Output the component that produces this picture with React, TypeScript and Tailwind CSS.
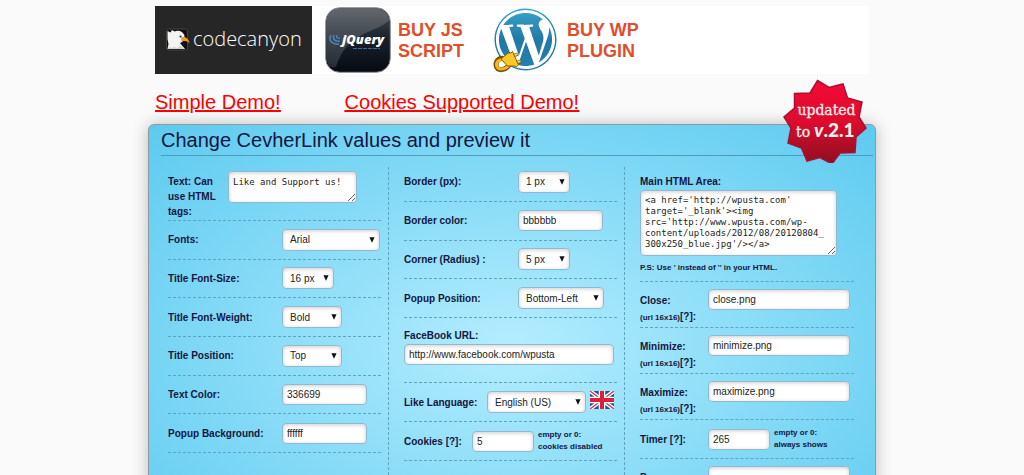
import type { ReactNode } from "react";
import { FaWordpress } from "react-icons/fa";

const box =
  "rounded border border-[#8fb9cf] bg-white font-normal text-[#222] shadow-[inset_0_1px_4px_rgba(0,0,0,0.2)] outline-none";
const field = `${box} text-[10px]`;
const area = `${box} block overflow-hidden p-1 font-['DejaVu_Sans_Mono',monospace] text-[9px]`;
const line = "border-b border-dashed border-[#5fa3be]";
const column = "pl-[15px] pr-[7px]";
const divider = "border-r border-dashed border-[#5fa3be]";

function Input({ id, value, className }: { id: string; value: string; className: string }) {
  return <input id={id} defaultValue={value} className={`${field} h-[21px] px-1 ${className}`} />;
}

function Select({ id, value, className }: { id: string; value: string; className: string }) {
  return (
    <span className={`relative inline-flex ${className}`}>
      <select id={id} className={`${field} h-[22px] w-full appearance-none pr-4 pl-[7px]`}>
        <option>{value}</option>
      </select>
      <svg viewBox="0 0 6 6" className="pointer-events-none absolute top-2 right-[5px] size-[6px]">
        <path d="M.4.3h5.2L3 5.7z" fill="#111" />
      </svg>
    </span>
  );
}

function Row({ id, label, offset, children }: { id: string; label: string; offset: string; children: ReactNode }) {
  return (
    <div className={`flex items-center ${line}`}>
      <label htmlFor={id} className={`shrink-0 ${offset}`}>
        {label}
      </label>
      {children}
    </div>
  );
}

function Note({ children }: { children: ReactNode }) {
  return <span className="ml-1 text-[8px] leading-3">{children}</span>;
}

function UrlRow({ id, label, value }: { id: string; label: string; value: string }) {
  return (
    <div className={`flex h-[46px] items-start pt-[7px] ${line}`}>
      <label htmlFor={id} className="w-[68px] shrink-0 pt-1 leading-4">
        {label}
        <br />
        <span className="text-[8px]">(url 16x16)</span>[?]:
      </label>
      <Input id={id} value={value} className="w-[142px]" />
    </div>
  );
}

function CodeCanyon() {
  return (
    <a href="#codecanyon" className="flex h-[68px] w-[157px] items-center bg-[#262626] pl-[11px]">
      <svg viewBox="0 0 24 24" className="size-6">
        <rect x=".5" y="1" width="21" height="21" rx="2" fill="#111" stroke="#444" />
        <path d="M1.500 21l1-5-1-5L1.500 3l3 1.500L6 2l2.500 1.500c4-2 8.500 0 10 4L18 12l-2 2-2 1 5 6z" fill="#f4f4f2" />
        <path d="M2 21l1-2 3 1 2-1 3 1 2-1 2-1 3 3z" fill="#cfd0cc" />
        <path d="M15 9.500c4-1.500 8 1 8.500 6-2-2.500-4-3-8-2z" fill="#f39b1d" />
        <circle cx="14.500" cy="8.500" r="1" fill="#222" />
      </svg>
      <span className="pb-[3px] pl-[3px] font-['Open_Sans',sans-serif] text-[20px] leading-6 font-light text-white">codecanyon</span>
    </a>
  );
}

function JQueryIcon() {
  return (
    <svg viewBox="0 0 66 66" className="size-[66px]" role="img" aria-label="jQuery">
      <defs>
        <linearGradient id="jq" x1="0" y1="0" x2="0" y2="1">
          <stop offset="0" stopColor="#484c52" />
          <stop offset=".5" stopColor="#16202b" />
          <stop offset="1" stopColor="#070b12" />
        </linearGradient>
        <linearGradient id="jqs" x1="0" y1="0" x2="0" y2="1">
          <stop offset="0" stopColor="#777b80" />
          <stop offset="1" stopColor="#3a4149" />
        </linearGradient>
      </defs>
      <rect x=".7" y=".7" width="64.6" height="64.6" rx="14" fill="url(#jq)" stroke="#8c8f93" />
      <path d="M1.500 50V15Q2 2 15 1.500H51Q62 3 64.500 13C50 27 22 24 11 60Q2 62 1.500 50z" fill="url(#jqs)" opacity=".6" />
      <g fill="none" stroke="#4f82b5" strokeWidth="1.600">
        <path d="M6 28c-3 5 1 10 8 9" />
        <path d="M9 28c-2 4 1 7 6 6" />
        <path d="M12 28c-1 2 0 4 3 3" />
      </g>
      <text x="17" y="37" fontFamily="Open Sans, sans-serif" fontSize="13" fontWeight="800" fontStyle="italic" fill="#fff">
        jQuery
      </text>
      <path d="M28 41.500h27" stroke="#396c98" strokeWidth="1.200" strokeDasharray="4 1" />
    </svg>
  );
}

function WordPressIcon() {
  return (
    <svg viewBox="0 0 66 66" className="size-[66px]" role="img" aria-label="WordPress plugin">
      <defs>
        <linearGradient id="wp" x1="0" y1="0" x2="0" y2="1">
          <stop offset="0" stopColor="#3aa5cc" />
          <stop offset=".5" stopColor="#2279a5" />
          <stop offset="1" stopColor="#2380ad" />
        </linearGradient>
      </defs>
      <circle cx="33" cy="32.500" r="31" fill="#fff" />
      <FaWordpress x={0.5} y={0.5} size={64} fill="url(#wp)" />
      <path d="M17 56c-3 8-14 9-14 2 0-5 4-8 9-6" fill="none" stroke="#7c5310" strokeWidth="5" strokeLinecap="round" />
      <path d="M17 56c-3 7-13 8-13.500 2 0-4 4-6 8-5" fill="none" stroke="#f8b818" strokeWidth="3" strokeLinecap="round" />
      <path d="M20 49l5-2M23 56l5-2" stroke="#8b5a10" strokeWidth="3.500" />
      <path d="M20 49l4.500-2M23 56l4.500-2" stroke="#fce16c" strokeWidth="1.700" />
      <path d="M8 52l7-6 3 0 1.500-1.500 6 13.500-2 1.500-3-.5-6 0z" fill="#fbc825" stroke="#8b5a10" />
    </svg>
  );
}

function Badge() {
  return (
    <svg viewBox="0 0 84 84" className="absolute -top-[46px] right-2 size-[84px]">
      <defs>
        <linearGradient id="bd" x1="0" y1="0" x2="0" y2="1">
          <stop offset="0" stopColor="#f50a35" />
          <stop offset=".5" stopColor="#dc0c2d" />
          <stop offset="1" stopColor="#8c1020" />
        </linearGradient>
      </defs>
      <path
        d="M34.500 1.500L46 8.500 60 5l4.500 14L79 23l-3 15 7 11-10 9-1 15.500-15 .5-8 11-12-6.500L24 82l-5.500-13L5 64l3-15L1 38l10.500-9V14.500L27 14z"
        fill="url(#bd)"
        stroke="#a80f35"
        strokeWidth="1.500"
      />
      <g fill="#f7eeee">
        <text x="43.500" y="36" fontSize="14" fontFamily="DejaVu Serif, serif" textAnchor="middle" stroke="#f7eeee" strokeWidth=".3">
          updated
        </text>
        <text x="13" y="58" fontSize="14" fontFamily="DejaVu Serif, serif" stroke="#f7eeee" strokeWidth=".3">
          to
        </text>
        <text x="31" y="58" fontSize="19" fontFamily="Lato, sans-serif" fontWeight="900">
          <tspan fontStyle="italic">v</tspan>.2.1
        </text>
      </g>
    </svg>
  );
}

function Flag() {
  return (
    <svg viewBox="0 0 24 18" className="mb-1 ml-1 h-[18px] w-6" role="img" aria-label="United Kingdom">
      <rect width="24" height="18" fill="#25509c" />
      <path d="M0 0l24 18M24 0L0 18" stroke="#fff" strokeWidth="4" />
      <path d="M0 0l24 18M24 0L0 18" stroke="#d8213b" strokeWidth="1.200" />
      <path d="M12 0v18M0 9h24" stroke="#fff" strokeWidth="6.500" />
      <path d="M12 0v18M0 9h24" stroke="#d8213b" strokeWidth="4" />
    </svg>
  );
}

const snippet =
  "<a href='http://wpusta.com' target='_blank'><img src='http://www.wpusta.com/wp-content/uploads/2012/08/20120804_300x250_blue.jpg'/></a>";

export default function App() {
  return (
    <div className="h-screen overflow-hidden bg-[#fafafa] font-['Liberation_Sans',Arial,sans-serif] text-[#15153f]">
      <div className="mx-auto max-w-[728px]">
        <header className="px-[7px] pt-[6px]">
          <div className="flex h-[68px] items-center bg-white text-[18px] leading-[21px] font-bold text-[#e04e2c]">
            <CodeCanyon />
            <a href="#script" className="ml-[13px] flex items-center gap-[7px]">
              <JQueryIcon />
              <span className="pt-[2px]">
                BUY JS
                <br />
                SCRIPT
              </span>
            </a>
            <a href="#plugin" className="ml-[29px] flex items-center gap-2">
              <WordPressIcon />
              <span className="pt-[2px]">
                BUY WP
                <br />
                PLUGIN
              </span>
            </a>
          </div>
          <nav className="flex h-[50px] items-center gap-16 pt-[6px] text-[20px] leading-6 text-[#ff0000] underline">
            <a href="#simple">Simple Demo!</a>
            <a href="#cookies-demo">Cookies Supported Demo!</a>
          </nav>
        </header>

        <main className="relative rounded-md border border-[#8e9a9e] bg-[radial-gradient(ellipse_at_center,#b4edff_0%,#5ccaef_100%)] pb-16 shadow-[0_0_16px_rgba(0,0,0,0.25)]">
          <Badge />
          <h1 className="mr-[2px] ml-3 h-[31px] border-b border-[#4f9cb8] text-[20px] leading-[30px]">
            Change CevherLink values and preview it
          </h1>
          <form className="grid grid-cols-3 pt-[11px] pr-[14px] pl-1 text-[10px] font-bold">
            <section className={`${column} ${divider}`}>
              <div className={`flex h-[54px] items-start gap-[9px] pt-1 ${line}`}>
                <label htmlFor="text" className="w-[51px] shrink-0 pt-[3px] leading-[15px]">
                  Text: Can use HTML tags:
                </label>
                <textarea id="text" defaultValue="Like and Support us!" className={`${area} h-8 w-[129px] leading-3`} />
              </div>
              <div className="grid h-[232px] auto-rows-fr">
                <Row id="fonts" label="Fonts:" offset="w-[114px]">
                  <Select id="fonts" value="Arial" className="w-[98px]" />
                </Row>
                <Row id="size" label="Title Font-Size:" offset="w-[114px]">
                  <Select id="size" value="16 px" className="w-[52px]" />
                </Row>
                <Row id="weight" label="Title Font-Weight:" offset="w-[114px]">
                  <Select id="weight" value="Bold" className="w-[60px]" />
                </Row>
                <Row id="title-position" label="Title Position:" offset="w-[114px]">
                  <Select id="title-position" value="Top" className="w-[60px]" />
                </Row>
                <Row id="color" label="Text Color:" offset="w-[114px]">
                  <Input id="color" value="336699" className="w-[85px]" />
                </Row>
                <Row id="background" label="Popup Background:" offset="w-[114px]">
                  <Input id="background" value="ffffff" className="w-[85px]" />
                </Row>
              </div>
            </section>

            <section className={`${column} ${divider}`}>
              <div className="-mt-1 grid h-[155px] auto-rows-fr">
                <Row id="border" label="Border (px):" offset="w-[114px]">
                  <Select id="border" value="1 px" className="w-[52px]" />
                </Row>
                <Row id="border-color" label="Border color:" offset="w-[114px]">
                  <Input id="border-color" value="bbbbbb" className="w-[85px]" />
                </Row>
                <Row id="corner" label="Corner (Radius) :" offset="w-[114px]">
                  <Select id="corner" value="5 px" className="w-[52px]" />
                </Row>
                <Row id="popup-position" label="Popup Position:" offset="w-[114px]">
                  <Select id="popup-position" value="Bottom-Left" className="w-[86px]" />
                </Row>
              </div>
              <div className={`flex h-[65px] flex-col gap-[2px] pt-3 ${line}`}>
                <label htmlFor="facebook" className="leading-3">
                  FaceBook URL:
                </label>
                <Input id="facebook" value="http://www.facebook.com/wpusta" className="w-[210px]" />
              </div>
              <div className="grid h-[78px] auto-rows-fr">
                <Row id="language" label="Like Language:" offset="w-[83px]">
                  <Select id="language" value="English (US)" className="w-[99px]" />
                  <Flag />
                </Row>
                <Row id="cookies" label="Cookies [?]:" offset="w-[68px]">
                  <Input id="cookies" value="5" className="w-[62px]" />
                  <Note>
                    empty or 0:
                    <br />
                    cookies disabled
                  </Note>
                </Row>
              </div>
            </section>

            <section className={column}>
              <div className={`-mt-1 h-[119px] pt-[13px] ${line}`}>
                <label htmlFor="html" className="block pb-[2px] leading-3">
                  Main HTML Area:
                </label>
                <textarea id="html" defaultValue={snippet} className={`${area} h-[66px] w-[197px] pr-2 leading-[11px] break-words`} />
                <p className="pt-[6px] text-[8px] leading-3">P.S: Use ' instead of '' in your HTML.</p>
              </div>
              <UrlRow id="close" label="Close:" value="close.png" />
              <UrlRow id="minimize" label="Minimize:" value="minimize.png" />
              <UrlRow id="maximize" label="Maximize:" value="maximize.png" />
              <div className="grid h-[39px]">
                <Row id="timer" label="Timer [?]:" offset="w-[68px]">
                  <Input id="timer" value="265" className="w-[62px]" />
                  <Note>
                    empty or 0:
                    <br />
                    always shows
                  </Note>
                </Row>
              </div>
              <UrlRow id="popup" label="Popup:" value="" />
            </section>
          </form>
        </main>
      </div>
    </div>
  );
}
